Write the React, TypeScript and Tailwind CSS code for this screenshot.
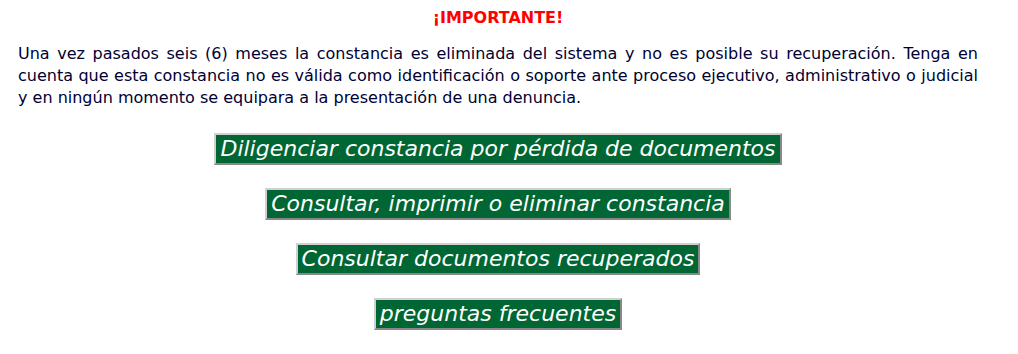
import React from "react";

const buttons = [
  "Diligenciar constancia por pérdida de documentos",
  "Consultar, imprimir o eliminar constancia",
  "Consultar documentos recuperados",
  "preguntas frecuentes",
];

export default function App() {
  return (
    <div className="bg-white w-[1018px] h-[354px] overflow-hidden" style={{ fontFamily: '"DejaVu Sans", Verdana, sans-serif' }}>
      <div className="ml-[18px] w-[960px] pt-[9px]">
        <p className="text-center text-[16px] leading-[18px] font-bold text-[#ff0000]">¡IMPORTANTE!</p>
        <p className="mt-[16px] text-[16px] leading-[22px] text-[#000033] text-justify">
          Una vez pasados seis (6) meses la constancia es eliminada del sistema y no es posible su recuperación. Tenga en cuenta que esta constancia no es válida como identificación o soporte ante proceso ejecutivo, administrativo o judicial y en ningún momento se equipara a la presentación de una denuncia.
        </p>
        <div className="mt-[24px] flex flex-col items-center gap-[23px]">
          {buttons.map((b) => (
            <a
              key={b}
              className="block bg-[#006633] text-white italic text-[22px] leading-[28px] px-[4px] border-2 border-solid border-t-[#d0d0d0] border-l-[#d0d0d0] border-b-[#888888] border-r-[#888888]"
            >
              {b}
            </a>
          ))}
        </div>
      </div>
    </div>
  );
}
